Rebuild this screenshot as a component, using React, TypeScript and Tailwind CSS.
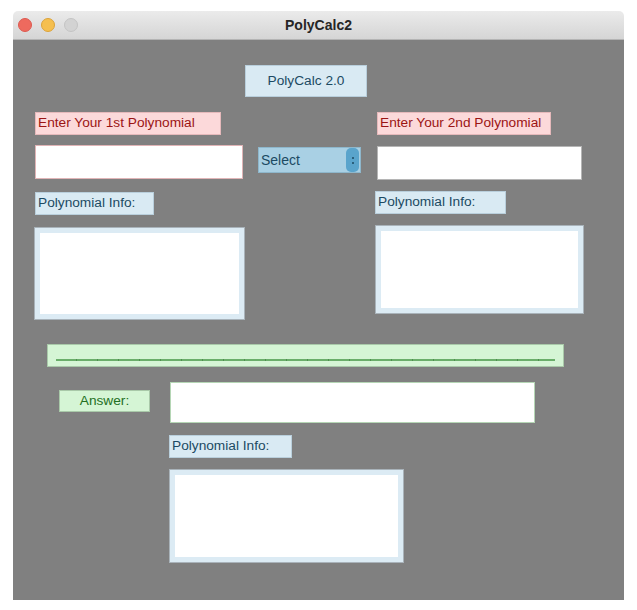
import React from "react";

const font = "font-['Liberation_Sans',Arial,sans-serif]";

function BlueLabel({ text, className }: { text: string; className: string }) {
    return (
        <div
            className={`flex h-[23px] items-center border border-[#b9cfdc] bg-[#d9eaf3] pl-[2px] text-[13.7px] text-[#1c4a63] ${className}`}
        >
            {text}
        </div>
    );
}

function PinkLabel({ text, className }: { text: string; className: string }) {
    return (
        <div
            className={`flex h-[23px] items-center border border-[#e6b9bb] bg-[#fcd9da] pl-[2px] text-[13.7px] text-[#9b1414] ${className}`}
        >
            {text}
        </div>
    );
}

function InfoBox({ className }: { className: string }) {
    return (
        <div
            className={`border border-[#a9b3ba] bg-[#dcebf4] p-[5px] ${className}`}
        >
            <div className="h-full w-full bg-white" />
        </div>
    );
}

export default function App() {
    return (
        <div className={`h-[610px] w-[637px] bg-white pt-[11px] pl-[13px] ${font}`}>
            <div className="flex h-[589px] w-[611px] flex-col">
                {/* title bar */}
                <div className="relative flex h-[29px] items-center justify-center rounded-t-[5px] border-b border-[#b4b4b4] bg-gradient-to-b from-[#ebebeb] to-[#d5d5d5]">
                    <div className="absolute left-[5px] top-[7px] flex gap-[9px]">
                        <span className="h-[14px] w-[14px] rounded-full border border-[#dd5a50] bg-[#ee6a5e]" />
                        <span className="h-[14px] w-[14px] rounded-full border border-[#dca33a] bg-[#f5bf4f]" />
                        <span className="h-[14px] w-[14px] rounded-full border border-[#c4c4c4] bg-[#d3d3d3]" />
                    </div>
                    <span className="text-[14px] font-bold text-[#262626]">PolyCalc2</span>
                </div>

                {/* content */}
                <div className="flex flex-1 flex-col bg-[#808080]">
                    <div className="mt-[25px] flex pl-[232px]">
                        <div className="flex h-[32px] w-[122px] items-center justify-center border border-[#b9cfdc] bg-[#d9eaf3] text-[13.7px] text-[#1c4a63]">
                            PolyCalc 2.0
                        </div>
                    </div>

                    <div className="mt-[15px] flex">
                        <PinkLabel text="Enter Your 1st Polynomial" className="ml-[22px] w-[186px]" />
                        <PinkLabel text="Enter Your 2nd Polynomial" className="ml-[156px] w-[174px]" />
                    </div>

                    <div className="mt-[10px] flex items-start">
                        <div className="ml-[22px] h-[34px] w-[208px] border border-[#e0b4b6] bg-white" />
                        <div className="ml-[15px] mt-[2px] flex h-[26px] w-[103px] items-center justify-between border border-[#8eb7cc] bg-[#a9d0e4] pl-[2px] pr-[1px]">
                            <span className="text-[14px] text-[#1c4a63]">Select</span>
                            <span className="flex h-[24px] w-[13px] flex-col items-center justify-center gap-[3px] rounded-[5px] bg-[#5aa4cc]">
                                <span className="h-[2px] w-[2px] rounded-full bg-[#1c4a63]" />
                                <span className="h-[2px] w-[2px] rounded-full bg-[#1c4a63]" />
                            </span>
                        </div>
                        <div className="ml-[16px] mt-[1px] h-[34px] w-[205px] border border-[#b5b5b5] bg-white" />
                    </div>

                    <div className="mt-[11px] flex items-start">
                        <BlueLabel text="Polynomial Info:" className="ml-[22px] mt-[1px] h-[22px] w-[119px]" />
                        <BlueLabel text="Polynomial Info:" className="ml-[221px] w-[131px]" />
                    </div>

                    <div className="mt-[10px] flex items-start">
                        <InfoBox className="ml-[21px] mt-[2px] h-[93px] w-[211px]" />
                        <InfoBox className="ml-[130px] h-[89px] w-[209px]" />
                    </div>

                    <div className="ml-[34px] mt-[24px] flex h-[23px] w-[517px] items-end border border-[#a9c9a9] bg-[#d5f5d5] px-[8px] pb-[5px]">
                        <div className="h-[2px] w-full bg-[repeating-linear-gradient(90deg,#6aae6a_0px,#6aae6a_20px,#4f8f4f_20px,#4f8f4f_21px)]" />
                    </div>

                    <div className="mt-[15px] flex items-start">
                        <div className="ml-[46px] mt-[8px] flex h-[22px] w-[91px] items-center justify-center border border-[#a9c9a9] bg-[#d5f5d5] text-[13.7px] text-[#237023]">
                            Answer:
                        </div>
                        <div className="ml-[20px] h-[41px] w-[365px] border border-[#b5d6b5] bg-white" />
                    </div>

                    <div className="mt-[12px] flex">
                        <BlueLabel text="Polynomial Info:" className="ml-[156px] w-[123px]" />
                    </div>

                    <div className="mt-[11px] flex">
                        <InfoBox className="ml-[156px] h-[94px] w-[235px]" />
                    </div>
                </div>
            </div>
        </div>
    );
}
